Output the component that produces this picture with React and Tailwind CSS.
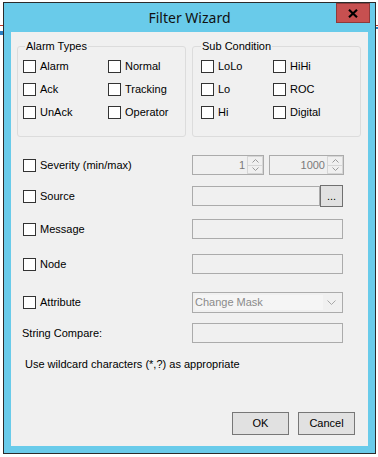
import React from 'react';

const font = "font-['Liberation_Sans',Arial,sans-serif]";

function Check({ label }) {
  return (
    <label className="flex items-center gap-[4px] h-[23px] text-[11px] leading-[13px] text-black">
      <span className="w-[13px] h-[13px] border border-[#333] bg-white shrink-0" />
      <span>{label}</span>
    </label>
  );
}

function Chevron({ up }) {
  return (
    <svg width="7" height="4" viewBox="0 0 7 4" className="block">
      <path d={up ? 'M0.5 3.5 L3.5 0.5 L6.5 3.5' : 'M0.5 0.5 L3.5 3.5 L6.5 0.5'} fill="none" stroke="#9a9a9a" strokeWidth="1" />
    </svg>
  );
}

function UpDown({ value, width }) {
  return (
    <div className={`flex h-[20px] border border-[#ababab] bg-[#f0f0f0] ${width}`}>
      <div className="flex-1 flex items-center justify-end pr-[2px] text-[11px] text-[#7a7a7a]">{value}</div>
      <div className="w-[16px] flex flex-col">
        <div className="flex-1 flex items-center justify-center border border-[#d6d6d6] bg-[#f0f0f0]"><Chevron up /></div>
        <div className="flex-1 flex items-center justify-center border border-t-0 border-[#d6d6d6] bg-[#f0f0f0]"><Chevron /></div>
      </div>
    </div>
  );
}

function TextBox({ className = 'w-[151px]' }) {
  return <div className={`h-[20px] border border-[#ababab] bg-[#f0f0f0] ${className}`} />;
}

function Row({ mt, h = 'h-[20px]', left, children }) {
  return (
    <div className={`flex items-center pl-[6px] ${h} ${mt}`}>
      <div className="w-[169px] shrink-0">{left}</div>
      {children}
    </div>
  );
}

export default function App() {
  return (
    <div className={`w-[378px] h-[457px] bg-white relative overflow-hidden ${font}`}>
      {/* bits of the desktop behind the dialog */}
      <div className="absolute left-0 top-[25px] w-[3px] h-[1px] bg-[#c0392b]" />
      <div className="absolute left-0 top-[31px] w-[3px] h-[4px] bg-[#2a7fc1]" />
      <div className="absolute right-0 top-[25px] w-[3px] h-[1px] bg-[#c0392b]" />
      <div className="absolute right-0 top-[27px] w-[3px] h-[2px] bg-[#2a7fc1]" />

      <div className="ml-[3px] mt-[2px] w-[373px] h-[452px] border border-[#2b2b2b] bg-[#69cbea] px-[7px] pb-[7px] flex flex-col relative">
        <div className="h-[29px] shrink-0 flex items-center justify-center text-[14px] text-[#111] font-['Noto_Sans',sans-serif]">
          Filter Wizard
        </div>
        <button className="absolute top-0 right-[5px] w-[34px] h-[20px] bg-[#c75050] border border-[#8e3a3a] flex items-center justify-center">
          <svg width="10" height="9" viewBox="0 0 10 9">
            <path d="M1 0.8 L9 8.2 M9 0.8 L1 8.2" stroke="#000" strokeWidth="2.2" />
          </svg>
        </button>

        <div className="h-[414px] bg-[#f0f0f0] flex flex-col px-[6px] pt-[8px] pb-[11px]">
          <div className="flex gap-[6px]">
            <fieldset className="w-[169px] border border-[#dcdcdc] rounded-[3px] p-0">
              <legend className="ml-[7px] px-[1px] text-[11px] leading-[13px] text-black">Alarm Types</legend>
              <div className="grid grid-cols-[85px_1fr] pl-[5px] pt-[2px] pb-[12px]">
                <Check label="Alarm" />
                <Check label="Normal" />
                <Check label="Ack" />
                <Check label="Tracking" />
                <Check label="UnAck" />
                <Check label="Operator" />
              </div>
            </fieldset>
            <fieldset className="w-[169px] border border-[#dcdcdc] rounded-[3px] p-0">
              <legend className="ml-[8px] px-[1px] text-[11px] leading-[13px] text-black">Sub Condition</legend>
              <div className="grid grid-cols-[72px_1fr] pl-[8px] pt-[2px] pb-[12px]">
                <Check label="LoLo" />
                <Check label="HiHi" />
                <Check label="Lo" />
                <Check label="ROC" />
                <Check label="Hi" />
                <Check label="Digital" />
              </div>
            </fieldset>
          </div>

          <Row mt="mt-[18px]" left={<Check label="Severity (min/max)" />}>
            <UpDown value="1" width="w-[72px]" />
            <div className="w-[5px]" />
            <UpDown value="1000" width="w-[75px]" />
          </Row>
          <Row mt="mt-[11px]" left={<Check label="Source" />}>
            <TextBox className="w-[128px]" />
            <button className="ml-[0px] w-[23px] h-[22px] border border-[#707070] bg-[#e1e1e1] text-[11px] leading-[10px] text-black flex items-center justify-center">...</button>
          </Row>
          <Row mt="mt-[13px]" left={<Check label="Message" />}>
            <TextBox />
          </Row>
          <Row mt="mt-[15px]" left={<Check label="Node" />}>
            <TextBox />
          </Row>
          <Row mt="mt-[18px]" h="h-[21px]" left={<Check label="Attribute" />}>
            <div className="w-[151px] h-[21px] border border-[#ababab] bg-[#f0f0f0] flex items-center p-[2px]">
              <div className="w-[128px] h-full bg-[#f5f5f5] flex items-center text-[11px] text-[#8a8a8a]">Change Mask</div>
              <div className="flex-1 flex items-center justify-center">
                <svg width="9" height="5" viewBox="0 0 9 5">
                  <path d="M0.5 0.5 L4.5 4.5 L8.5 0.5" fill="none" stroke="#a8a8a8" strokeWidth="1" />
                </svg>
              </div>
            </div>
          </Row>
          <div className="flex items-center h-[20px] mt-[10px] pl-[5px]">
            <div className="w-[170px] text-[11px] leading-[13px] text-black">String Compare:</div>
            <TextBox />
          </div>
          <div className="mt-[15px] pl-[8px] text-[11px] leading-[13px] text-black">
            Use wildcard characters (*,?) as appropriate
          </div>

          <div className="mt-auto flex justify-end gap-[9px] pr-[7px]">
            <button className="w-[57px] h-[23px] border border-[#777] bg-[#e1e1e1] text-[11px] text-black">OK</button>
            <button className="w-[57px] h-[23px] border border-[#777] bg-[#e1e1e1] text-[11px] text-black">Cancel</button>
          </div>
        </div>
      </div>
    </div>
  );
}
